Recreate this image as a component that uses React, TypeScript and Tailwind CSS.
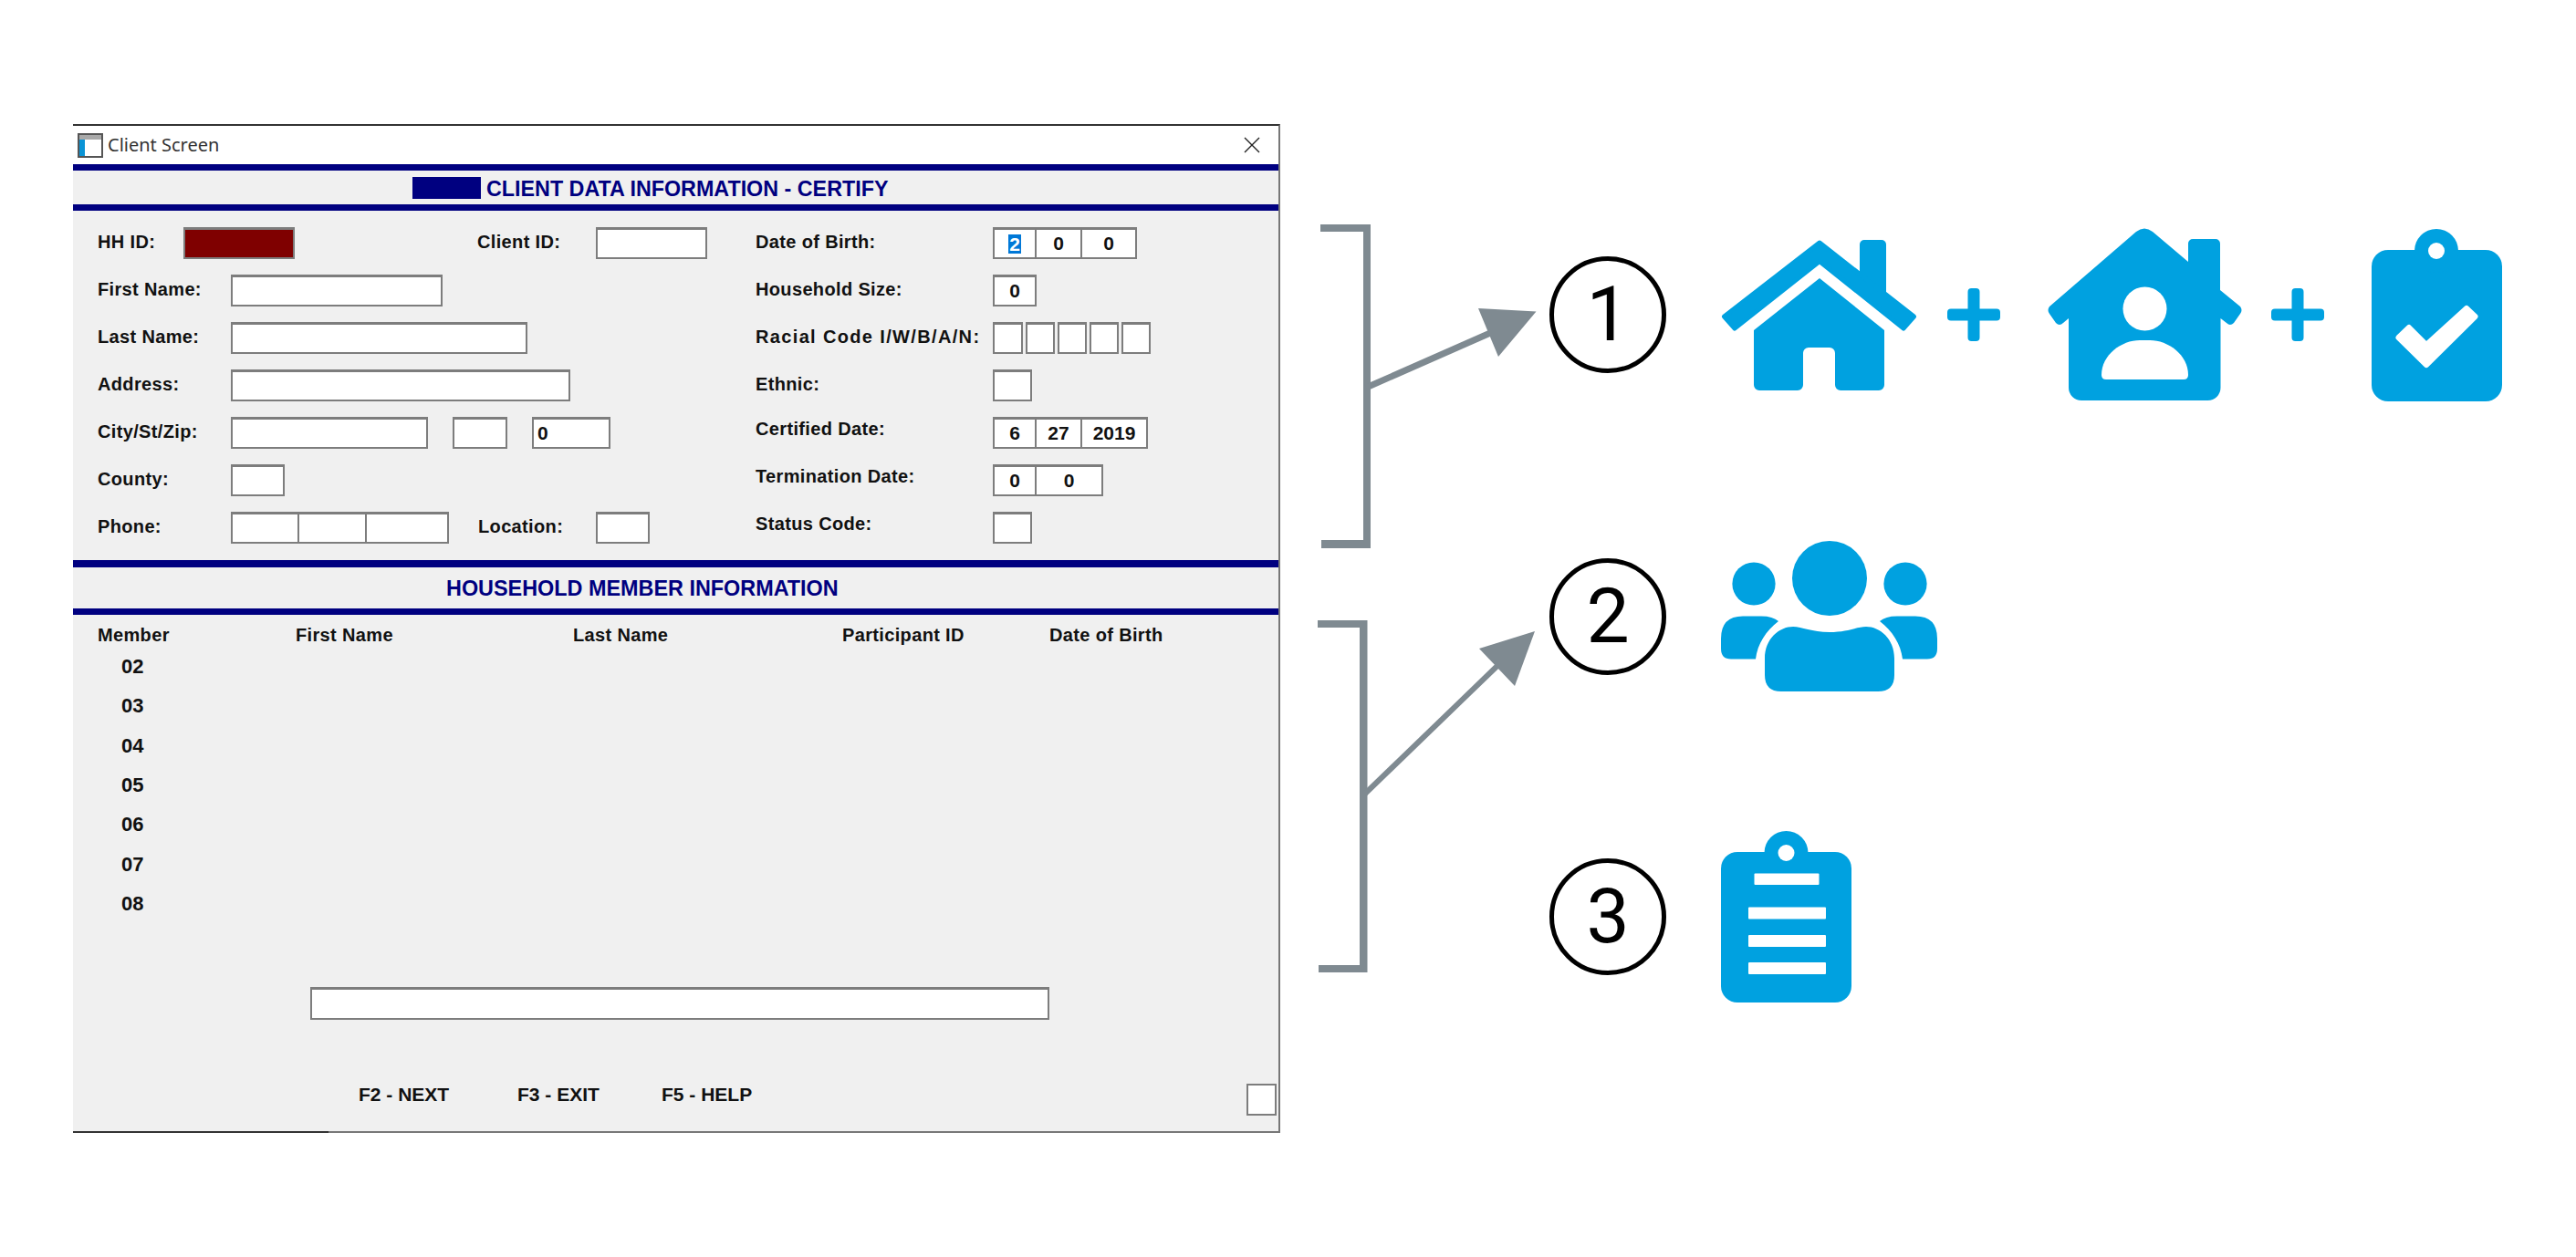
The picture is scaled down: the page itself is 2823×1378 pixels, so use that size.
const BLUE = "#00a1e0";
const GREY = "#7f8a91";

function Field({
  w,
  value,
  selected,
  left,
  overlap,
  maroon,
}: {
  w: string;
  value?: string;
  selected?: boolean;
  left?: boolean;
  overlap?: boolean;
  maroon?: boolean;
}) {
  return (
    <div
      className={`${w} h-[35px] shrink-0 flex items-center border-2 border-t-[3px] border-[#7d7d7d] text-[21px] font-bold text-[#111] ${
        maroon ? "bg-[#7f0000]" : "bg-white"
      } ${left ? "justify-start pl-[4px]" : "justify-center"} ${overlap ? "-ml-[2px]" : ""}`}
    >
      {selected ? <span className="bg-[#0078d7] text-white leading-[21px] px-[1px]">{value}</span> : value}
    </div>
  );
}

function Label({ w, text, lift, wide }: { w: string; text: string; lift?: boolean; wide?: boolean }) {
  return (
    <div
      className={`${w} shrink-0 text-[20px] font-bold leading-[24px] text-[#111] whitespace-nowrap ${
        lift ? "mb-[9px]" : "mb-[3px]"
      } ${wide ? "tracking-[1.35px]" : "tracking-[0.35px]"}`}
    >
      {text}
    </div>
  );
}

function Bar({ h }: { h: string }) {
  return <div className={`${h} bg-[#000080]`} />;
}

function Row({ children }: { children: React.ReactNode }) {
  return <div className="flex items-center h-[35px]">{children}</div>;
}

function AppGlyph() {
  return (
    <svg width="28" height="27" viewBox="0 0 28 27" className="shrink-0">
      <rect width="28" height="27" fill="#555" />
      <rect x="2" y="2" width="24" height="23" fill="#fff" />
      <rect x="2" y="2" width="24" height="5" fill="#a9a9a9" />
      <rect x="2" y="7" width="6" height="18" fill="#0a94d6" />
    </svg>
  );
}

function HomeIcon() {
  return (
    <svg width="215" height="167" viewBox="1886 262 215 167" className="shrink-0" fill={BLUE}>
      <path d="M2038 268a5 5 0 0 1 5-5h19a5 5 0 0 1 5 5v66l-29-24z" />
      <path
        d="M1994 266L1889.5 347L1901 360L1994 286.5L2086 360L2097.5 347Z"
        stroke={BLUE}
        strokeWidth="5"
        strokeLinejoin="round"
      />
      <path d="M1994 305L2065 362V422a6 6 0 0 1-6 6H2017a6 6 0 0 1-6-6V387a6 6 0 0 0-6-6H1982a6 6 0 0 0-6 6V422a6 6 0 0 1-6 6H1928a6 6 0 0 1-6-6V362z" />
    </svg>
  );
}

function Plus() {
  return (
    <svg width="58" height="58" viewBox="0 0 58 58" className="shrink-0" fill={BLUE}>
      <rect x="22.5" y="0" width="13" height="58" rx="4" />
      <rect x="0" y="22.5" width="58" height="13" rx="4" />
    </svg>
  );
}

function PersonHomeIcon() {
  return (
    <svg width="214" height="190" viewBox="2244 251 214 190" className="shrink-0" fill={BLUE}>
      <path d="M2341 255Q2350 248 2359 255L2398 288V268a5 5 0 0 1 5-5H2428a5 5 0 0 1 5 5V319L2455 337Q2458 341 2455 345L2448 355Q2444 359 2440 355L2433.5 350V426a14 14 0 0 1-14 14H2281a14 14 0 0 1-14-14V350L2261 355Q2257 359 2253 355L2246 345Q2243 341 2246 337z" />
      <circle cx="2350.5" cy="339.5" r="24" fill="#fff" />
      <path
        d="M2303 412C2303 390 2325 374 2345 374H2356C2376 374 2398 390 2398 412Q2398 417 2393 417H2308Q2303 417 2303 412Z"
        fill="#fff"
      />
    </svg>
  );
}

function CheckClipboardIcon() {
  return (
    <svg width="143" height="189" viewBox="2599 251 143 189" className="shrink-0" fill={BLUE}>
      <rect x="2599" y="274" width="143" height="166" rx="18" />
      <circle cx="2670" cy="275" r="24" />
      <circle cx="2670" cy="275" r="9" fill="#fff" />
      <polygon
        points="2628.5,370 2640,359 2659,378 2703,338 2712.5,347 2659,400"
        fill="#fff"
        stroke="#fff"
        strokeWidth="6"
        strokeLinejoin="round"
      />
    </svg>
  );
}

function PeopleIcon() {
  return (
    <svg width="237" height="165" viewBox="1886 593 237 165" className="shrink-0" fill={BLUE}>
      <circle cx="2005" cy="634" r="41" />
      <circle cx="1922" cy="640" r="23.6" />
      <circle cx="2088" cy="640" r="23.6" />
      <path d="M1934 722C1934 700 1950 687 1965 687C1975 687 1985 693 2005 693C2025 693 2035 687 2045 687C2060 687 2076 700 2076 722V740Q2076 758 2058 758H1952Q1934 758 1934 740Z" />
      <path d="M1949 681C1935 692 1926 706 1924 722.5H1897Q1886 722.5 1886 711V700Q1886 675.4 1910 675.4H1930Q1943 675.4 1949 681Z" />
      <path
        d="M1949 681C1935 692 1926 706 1924 722.5H1897Q1886 722.5 1886 711V700Q1886 675.4 1910 675.4H1930Q1943 675.4 1949 681Z"
        transform="matrix(-1 0 0 1 4009 0)"
      />
    </svg>
  );
}

function ListClipboardIcon() {
  return (
    <svg width="143" height="188" viewBox="1886 911 143 188" className="shrink-0" fill={BLUE}>
      <rect x="1886" y="934" width="143" height="165" rx="18" />
      <circle cx="1957.5" cy="935" r="24" />
      <circle cx="1957.5" cy="935" r="9" fill="#fff" />
      <rect x="1922.5" y="957.5" width="71" height="12.5" rx="1" fill="#fff" />
      <rect x="1916" y="994.5" width="85" height="13" rx="1" fill="#fff" />
      <rect x="1916" y="1025" width="85" height="13" rx="1" fill="#fff" />
      <rect x="1916" y="1055" width="85" height="13" rx="1" fill="#fff" />
    </svg>
  );
}

function Step({ n }: { n: number }) {
  return (
    <div className="w-[128px] h-[128px] shrink-0 rounded-full border-[5px] border-black flex items-center justify-center font-['Roboto',sans-serif] font-normal text-[84px] leading-none text-black">
      {n}
    </div>
  );
}

const MEMBERS = ["02", "03", "04", "05", "06", "07", "08"];

export default function App() {
  return (
    <div className="w-full h-[1378px] bg-white flex pt-[136px] pl-[80px] overflow-hidden font-['Liberation_Sans',Arial,sans-serif]">
      {/* Client screen window */}
      <div className="w-[1323px] h-[1106px] shrink-0 flex flex-col bg-[#f0f0f0] border-t-2 border-t-[#333] border-r-2 border-r-[#777]">
        <div className="h-[42px] bg-white flex items-center pl-[5px] pr-[20px]">
          <AppGlyph />
          <span className="ml-[5px] font-['Noto_Sans',sans-serif] text-[20px] text-[#333]">Client Screen</span>
          <svg width="18" height="18" viewBox="0 0 18 18" className="ml-auto" stroke="#222" strokeWidth="1.4">
            <path d="M1 1L17 17M17 1L1 17" />
          </svg>
        </div>
        <Bar h="h-[7px]" />
        <div className="h-[37px] flex items-center pl-[372px]">
          <div className="w-[75px] h-[24px] bg-[#000080]" />
          <span className="ml-[6px] pt-[3px] text-[23.3px] font-bold text-[#000080] whitespace-nowrap">
            CLIENT DATA INFORMATION - CERTIFY
          </span>
        </div>
        <Bar h="h-[7px]" />

        {/* Client form */}
        <div className="grid grid-cols-[748px_1fr] pt-[18px] pb-[18px]">
          <div className="flex flex-col gap-[17px] pl-[27px]">
            <Row>
              <Label w="w-[94px]" text="HH ID:" />
              <Field w="w-[122px]" maroon />
              <div className="w-[200px]" />
              <Label w="w-[130px]" text="Client ID:" />
              <Field w="w-[122px]" />
            </Row>
            <Row>
              <Label w="w-[146px]" text="First Name:" />
              <Field w="w-[232px]" />
            </Row>
            <Row>
              <Label w="w-[146px]" text="Last Name:" />
              <Field w="w-[325px]" />
            </Row>
            <Row>
              <Label w="w-[146px]" text="Address:" />
              <Field w="w-[372px]" />
            </Row>
            <Row>
              <Label w="w-[146px]" text="City/St/Zip:" />
              <Field w="w-[216px]" />
              <div className="w-[27px]" />
              <Field w="w-[60px]" />
              <div className="w-[27px]" />
              <Field w="w-[86px]" value="0" left />
            </Row>
            <Row>
              <Label w="w-[146px]" text="County:" />
              <Field w="w-[59px]" />
            </Row>
            <Row>
              <Label w="w-[146px]" text="Phone:" />
              <Field w="w-[75px]" />
              <Field w="w-[76px]" overlap />
              <Field w="w-[92px]" overlap />
              <div className="w-[32px]" />
              <Label w="w-[129px]" text="Location:" />
              <Field w="w-[59px]" />
            </Row>
          </div>
          <div className="flex flex-col gap-[17px]">
            <Row>
              <Label w="w-[260px]" text="Date of Birth:" />
              <Field w="w-[48px]" value="2" selected />
              <Field w="w-[52px]" value="0" overlap />
              <Field w="w-[62px]" value="0" overlap />
            </Row>
            <Row>
              <Label w="w-[260px]" text="Household Size:" />
              <Field w="w-[48px]" value="0" />
            </Row>
            <Row>
              <Label w="w-[260px]" text="Racial Code I/W/B/A/N:" wide />
              <div className="flex gap-[3px]">
                <Field w="w-[33px]" />
                <Field w="w-[32px]" />
                <Field w="w-[32px]" />
                <Field w="w-[32px]" />
                <Field w="w-[32px]" />
              </div>
            </Row>
            <Row>
              <Label w="w-[260px]" text="Ethnic:" />
              <Field w="w-[43px]" />
            </Row>
            <Row>
              <Label w="w-[260px]" text="Certified Date:" lift />
              <Field w="w-[48px]" value="6" />
              <Field w="w-[52px]" value="27" overlap />
              <Field w="w-[74px]" value="2019" overlap />
            </Row>
            <Row>
              <Label w="w-[260px]" text="Termination Date:" lift />
              <Field w="w-[48px]" value="0" />
              <Field w="w-[75px]" value="0" overlap />
            </Row>
            <Row>
              <Label w="w-[260px]" text="Status Code:" lift />
              <Field w="w-[43px]" />
            </Row>
          </div>
        </div>

        <Bar h="h-[8px]" />
        <div className="h-[45px] flex items-center pl-[409px]">
          <span className="pt-[3px] text-[23.4px] font-bold text-[#000080] whitespace-nowrap">
            HOUSEHOLD MEMBER INFORMATION
          </span>
        </div>
        <Bar h="h-[7px]" />

        {/* Household table */}
        <div className="pt-[10px] pl-[27px] text-[20px] font-bold text-[#111]">
          <div className="grid grid-cols-[217px_304px_295px_227px_1fr] h-[24px] leading-[24px] mb-px whitespace-nowrap tracking-[0.35px]">
            <div>Member</div>
            <div>First Name</div>
            <div>Last Name</div>
            <div>Participant ID</div>
            <div>Date of Birth</div>
          </div>
          {MEMBERS.map((m) => (
            <div key={m} className="h-[43.3px] flex items-center pl-[26px] text-[22px]">
              {m}
            </div>
          ))}
        </div>

        <div className="mt-[70px] ml-[260px] w-[810px] h-[36px] bg-white border-2 border-t-[3px] border-[#7d7d7d]" />

        <div className="mt-[70px] h-[35px] flex items-start pl-[313px] pr-[2px] text-[21px] font-bold leading-[24px] text-[#111] whitespace-nowrap">
          <div className="w-[174px]">F2 - NEXT</div>
          <div className="w-[158px]">F3 - EXIT</div>
          <div>F5 - HELP</div>
          <div className="ml-auto w-[33px] h-[35px] bg-white border-2 border-[#7d7d7d]" />
        </div>

        <div className="mt-auto flex h-[2px]">
          <div className="w-[280px] bg-[#333]" />
          <div className="flex-1 bg-[#777]" />
        </div>
      </div>

      {/* Annotations */}
      <div className="relative flex-1 pt-[114px] pl-[295px]">
        <svg width="300" height="950" viewBox="1403 136 300 950" className="absolute left-0 top-0" fill={GREY}>
          <path d="M1447 246H1502V601H1448V592H1494V254H1447Z" />
          <path d="M1444 680H1498.5V1066H1445V1058H1490V688H1444Z" />
          <line x1="1497" y1="425" x2="1640" y2="362" stroke={GREY} strokeWidth="7" />
          <polygon points="1620,338 1683.5,341.5 1642,391" />
          <line x1="1495" y1="871" x2="1645" y2="726" stroke={GREY} strokeWidth="6" />
          <polygon points="1621,711 1682,692 1660,752" />
        </svg>

        <div className="relative flex flex-col gap-[153px]">
          <div className="flex items-center h-[190px]">
            <Step n={1} />
            <div className="ml-[60px]">
              <HomeIcon />
            </div>
            <div className="ml-[33px]">
              <Plus />
            </div>
            <div className="ml-[52px]">
              <PersonHomeIcon />
            </div>
            <div className="ml-[31px]">
              <Plus />
            </div>
            <div className="ml-[52px]">
              <CheckClipboardIcon />
            </div>
          </div>
          <div className="flex items-center h-[165px]">
            <Step n={2} />
            <div className="ml-[60px]">
              <PeopleIcon />
            </div>
          </div>
          <div className="flex items-center h-[188px]">
            <Step n={3} />
            <div className="ml-[60px]">
              <ListClipboardIcon />
            </div>
          </div>
        </div>
      </div>
    </div>
  );
}
